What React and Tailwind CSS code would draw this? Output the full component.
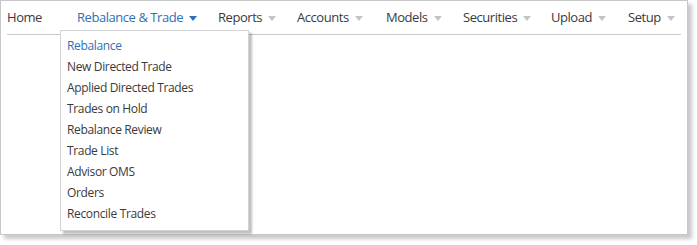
import React from 'react';

const navItems = [
    { label: 'Home', width: 'w-[70px]' },
    { label: 'Rebalance & Trade', active: true, caret: true, width: 'w-[141px]' },
    { label: 'Reports', caret: true, width: 'w-[79px]' },
    { label: 'Accounts', caret: true, width: 'w-[89px]' },
    { label: 'Models', caret: true, width: 'w-[77px]' },
    { label: 'Securities', caret: true, width: 'w-[88px]' },
    { label: 'Upload', caret: true, width: 'w-[77px]' },
    { label: 'Setup', caret: true, width: 'w-[56px]' },
];

const menuItems = [
    'Rebalance',
    'New Directed Trade',
    'Applied Directed Trades',
    'Trades on Hold',
    'Rebalance Review',
    'Trade List',
    'Advisor OMS',
    'Orders',
    'Reconcile Trades',
];

const Caret = ({ active }) => (
    <svg width="8" height="5" viewBox="0 0 8 5" className="ml-[6px] mt-[1px]">
        <path d="M0 0 L8 0 L4 5 Z" fill={active ? '#2f6fb7' : '#c4c4c4'} />
    </svg>
);

const App = () => {
    return (
        <div className="w-[697px] h-[245px] bg-white font-['Open_Sans',sans-serif]">
            <div className="relative w-[688px] h-[235px] border border-[#c8c8c8] bg-white shadow-[4px_4px_4px_rgba(0,0,0,0.22)]">
                <nav className="flex items-center h-[33px] pl-[6px] text-[13px] tracking-[-0.45px]">
                    {navItems.map((item) => (
                        <div key={item.label} className={`flex items-center shrink-0 ${item.width}`}>
                            <span className={item.active ? 'text-[#2f6fb7]' : 'text-[#3a3a3a]'}>{item.label}</span>
                            {item.caret && <Caret active={item.active} />}
                        </div>
                    ))}
                </nav>
                <div className="mx-[6px] h-px bg-[#c8c8c8]" />

                <div className="absolute left-[59px] top-[29px] w-[189px] h-[201px] bg-white border border-[#d4d4d4] shadow-[3px_3px_2px_rgba(0,0,0,0.25)] pt-[4px]">
                    {menuItems.map((label, i) => (
                        <div
                            key={label}
                            className={`h-[21px] flex items-center pl-[6px] text-[12px] tracking-[-0.35px] ${i === 0 ? 'text-[#2f6fb7]' : 'text-[#3a3a3a]'}`}
                        >
                            {label}
                        </div>
                    ))}
                </div>
            </div>
        </div>
    );
};

export default App;
